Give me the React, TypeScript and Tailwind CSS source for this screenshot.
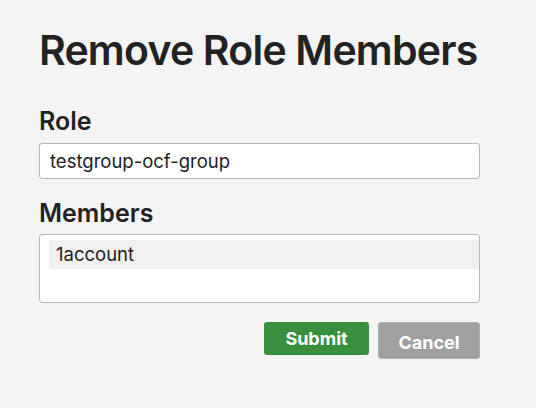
export default function App() {
  return (
    <div className="min-h-screen bg-[#f4f4f4] font-['Inter','Liberation_Sans',sans-serif] text-[#222222]">
      <div className="w-[441px] ml-[39px] pt-[26px]">
        <h1 className="text-[41px] leading-[48px] font-semibold tracking-[-0.8px] whitespace-nowrap">Remove Role Members</h1>
        <div className="mt-[32px] text-[25px] leading-[30px] font-semibold">Role</div>
        <div className="mt-[7px] h-[36px] bg-white border border-[#b8b8b8] rounded-[3px] px-[10px] flex items-center text-[18.5px] leading-[34px] text-[#222222]">
          testgroup-ocf-group
        </div>
        <div className="mt-[19px] text-[25px] leading-[30px] font-semibold">Members</div>
        <div className="mt-[6px] h-[69px] bg-white border border-[#b8b8b8] rounded-[3px] pl-[9px] pt-[5px]">
          <div className="h-[29px] bg-[#f0f0f0] pl-[7px] flex items-center text-[18.5px] leading-[29px] text-[#222222]">
            1account
          </div>
        </div>
        <div className="mt-[19px] flex justify-end items-start gap-[9px]">
          <button className="w-[105px] h-[33px] bg-[#388f3e] rounded-[3px] text-white text-[18px] font-bold leading-[33px]">
            Submit
          </button>
          <button className="w-[102px] h-[37px] bg-[#a0a0a0] border border-[#b0b0b0] rounded-[3px] text-white text-[18px] font-bold leading-[35px] pt-[2px]">
            Cancel
          </button>
        </div>
      </div>
    </div>
  );
}
